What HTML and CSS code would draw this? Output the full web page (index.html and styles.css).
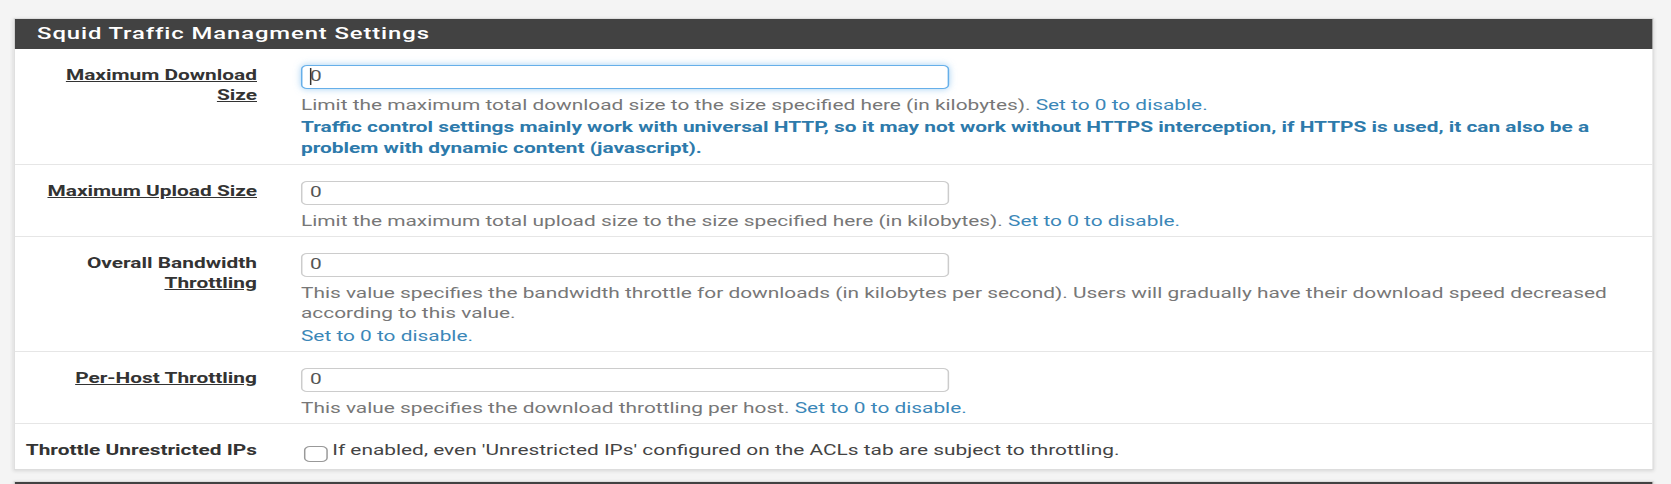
FILE: index.html
```html
<!DOCTYPE html>
<html lang="en">
<head>
<meta charset="utf-8">
<title>Squid Traffic Managment Settings</title>
<link rel="stylesheet" href="styles.css">
</head>
<body>
<div class="page">
  <section class="panel">
    <div class="panel-heading">
      <h2 class="panel-title">Squid Traffic Managment Settings</h2>
    </div>
    <div class="panel-body">
      <div class="form-row">
        <div class="label-col"><span class="lbl-u">Maximum Download Size</span></div>
        <div class="field-col">
          <span class="input-wrap caret"><input class="form-control focused" type="text" value="0"></span>
          <div class="help">Limit the maximum total download size to the size specified here (in kilobytes). <span class="hint">Set to 0 to disable.</span></div>
          <div class="help-strong">Traffic control settings mainly work with universal HTTP, so it may not work without HTTPS interception, if HTTPS is used, it can also be a problem with dynamic content (javascript).</div>
        </div>
      </div>
      <div class="form-row">
        <div class="label-col"><span class="lbl-u">Maximum Upload Size</span></div>
        <div class="field-col">
          <input class="form-control" type="text" value="0">
          <div class="help">Limit the maximum total upload size to the size specified here (in kilobytes). <span class="hint">Set to 0 to disable.</span></div>
        </div>
      </div>
      <div class="form-row">
        <div class="label-col">Overall Bandwidth <span class="lbl-u">Throttling</span></div>
        <div class="field-col">
          <input class="form-control" type="text" value="0">
          <div class="help">This value specifies the bandwidth throttle for downloads (in kilobytes per second). Users will gradually have their download speed decreased according to this value.</div>
          <div class="help-note">Set to 0 to disable.</div>
        </div>
      </div>
      <div class="form-row">
        <div class="label-col"><span class="lbl-u">Per-Host Throttling</span></div>
        <div class="field-col">
          <input class="form-control" type="text" value="0">
          <div class="help">This value specifies the download throttling per host. <span class="hint">Set to 0 to disable.</span></div>
        </div>
      </div>
      <div class="form-row check-row">
        <div class="label-col">Throttle Unrestricted IPs</div>
        <div class="field-col">
          <label class="check-label"><input class="check" type="checkbox">If enabled, even 'Unrestricted IPs' configured on the ACLs tab are subject to throttling.</label>
        </div>
      </div>
    </div>
  </section>
  <section class="panel">
    <div class="panel-heading"></div>
  </section>
</div>
</body>
</html>
```
FILE: styles.css
```css
html, body {
  margin: 0;
  background: #f4f4f4;
}

body {
  font-family: Roboto, "Liberation Sans", sans-serif;
  font-size: 14px;
  line-height: 20px;
  color: #333;
  overflow: hidden;
}

.page {
  width: 1121.48px;
  box-sizing: border-box;
  padding: 18px 11.9px 0 9.4px;
  transform: scaleX(1.49);
  transform-origin: 0 0;
}

.panel {
  background: #fff;
  border: 1px solid #ddd;
  box-shadow: 0 1px 3px rgba(0, 0, 0, 0.12);
  margin-bottom: 11px;
}

.panel-heading {
  background: #424242;
  height: 30px;
  padding: 0 14.5px;
}

.panel-title {
  margin: 0;
  font-size: 16px;
  line-height: 30px;
  font-weight: 500;
  letter-spacing: 0.6px;
  color: #fff;
}

.form-row {
  display: grid;
  grid-template-columns: 162.1px 1fr;
  column-gap: 29.5px;
  padding: 16px 10px 5px 0;
  border-top: 1px solid #e6e6e6;
}

.form-row:first-child {
  border-top: 0;
}

.label-col {
  padding-left: 5.7px;
  text-align: right;
  font-weight: 700;
  color: #333;
}

.lbl-u {
  text-decoration: underline;
}

.field-col {
  min-width: 0;
}

.form-control {
  display: block;
  box-sizing: border-box;
  width: 435px;
  height: 24px;
  padding: 0 5px 2px;
  border: 1px solid #ccc;
  border-radius: 4px;
  font-family: Roboto, "Liberation Sans", sans-serif;
  font-size: 14px;
  color: #555;
  background: #fff;
  outline: 0;
}

.form-control.focused {
  border-color: #66afe9;
  box-shadow: 0 0 6px rgba(102, 175, 233, 0.6);
}

.input-wrap {
  display: block;
  position: relative;
  width: 435px;
}

.caret::after {
  content: "";
  position: absolute;
  left: 6px;
  top: 3px;
  width: 1px;
  height: 17px;
  background: #333;
}

.help {
  margin-top: 6px;
  color: #777;
}

.hint {
  color: #3b87b8;
}

.help-strong {
  margin-top: 2px;
  line-height: 21px;
  font-weight: 700;
  color: #2d7aab;
}

.help-note {
  margin-top: 3px;
  color: #3b87b8;
}

.check-row {
  padding-bottom: 7px;
}

.check-label {
  color: #444;
}

.check {
  appearance: none;
  -webkit-appearance: none;
  box-sizing: border-box;
  width: 16px;
  height: 16px;
  margin: 0 3px 0 2px;
  border: 1px solid #999;
  border-radius: 4px;
  background: #fff;
  vertical-align: -7px;
}
```
